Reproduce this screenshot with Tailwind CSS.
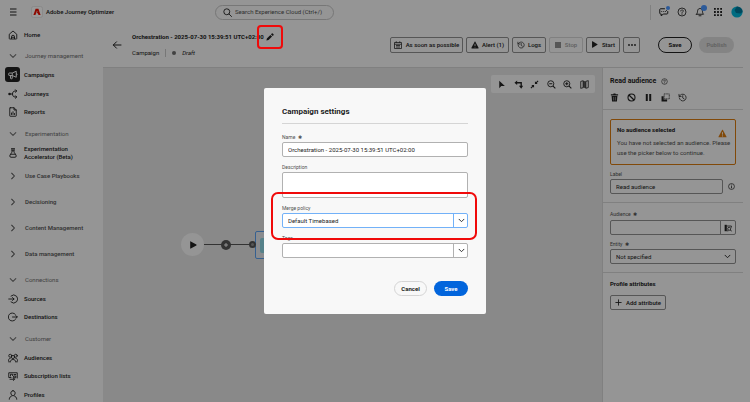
<!DOCTYPE html>
<html lang="en">
<head>
  <meta charset="UTF-8">
  <meta name="viewport" content="width=device-width, initial-scale=1">
  <title>Adobe Journey Optimizer</title>
  <script src="https://cdn.jsdelivr.net/npm/@tailwindcss/browser@4"></script>
</head>
<body class="h-screen overflow-hidden flex flex-col bg-[#f8f8f8] font-['Roboto','Open_Sans',sans-serif] text-[6px] leading-[8px] text-[#222]">

  <!-- Icons -->
  <svg class="hidden">
    <symbol id="down" viewBox="0 0 10 10"><path d="M1.5 3.2 5 6.7l3.500-3.500" fill="none" stroke="currentColor" stroke-width="1.300" stroke-linecap="round" stroke-linejoin="round"/></symbol>
    <symbol id="right" viewBox="0 0 10 10"><path d="M3.300 1.500 6.800 5 3.300 8.500" fill="none" stroke="currentColor" stroke-width="1.300" stroke-linecap="round" stroke-linejoin="round"/></symbol>
    <symbol id="help" viewBox="0 0 20 20"><g fill="none" stroke="currentColor" stroke-width="1.700"><circle cx="10" cy="10" r="8"/><path d="M7.500 8c0-3.200 5-3.200 5 0 0 1.800-2.500 1.800-2.500 3.800" stroke-linecap="round"/></g><circle cx="10" cy="14.200" r="1.100" fill="currentColor"/></symbol>
    <symbol id="history" viewBox="0 0 20 20"><g fill="none" stroke="currentColor" stroke-width="1.700" stroke-linecap="round"><path d="M3 11a7.500 7.500 0 1 0 2-6L2.500 7.500M2.200 3v4.700H7"/><path d="M10.500 6v5l3 2"/></g></symbol>
    <symbol id="play" viewBox="0 0 10 10"><path d="M1.500.8v8.400c0 .4.400.5.700.3l7-4c.4-.3.400-.7 0-1l-7-4c-.3-.2-.7 0-.7.300z" fill="currentColor"/></symbol>
    <symbol id="warn" viewBox="0 0 20 20"><path d="M10 1.500c.4 0 .7.200.9.500l8 15c.3.700-.1 1.500-.9 1.500H2c-.8 0-1.200-.8-.9-1.500l8-15c.2-.3.500-.5.900-.5z" fill="currentColor"/><path d="M10 7v5.500" stroke="#f8f8f8" stroke-width="2"/><circle cx="10" cy="15.300" r="1.200" fill="#f8f8f8"/></symbol>
  </svg>

  <!-- Top bar -->
  <header class="h-6 shrink-0 flex items-center pr-[7px]">
    <div class="flex w-[215px] shrink-0 items-center pl-2">
      <button aria-label="Menu"><svg class="size-[10px]" viewBox="0 0 10 10"><path d="M2 2h6.500M2 5h6.500M2 8h6.500" stroke="currentColor" stroke-width="1"/></svg></button>
      <a href="#" class="ml-[13px] flex items-center gap-[3px] font-medium">
        <svg class="size-3" viewBox="0 0 12 12"><rect x=".5" y=".5" width="11" height="11" rx="2" fill="#fff" stroke="#ddd" stroke-width=".7"/><path d="M4.600 2.800h2.800L9.600 9H7.500L6.900 7.300H5.700L6.100 6l.5.300L6 4.700 4.400 9H2.400z" fill="#eb1000"/></svg>
        Adobe Journey Optimizer
      </a>
    </div>
    <label class="flex w-[119px] h-[15px] items-center gap-[3px] rounded-full border border-[#c6c6c6] pr-1 pl-[7px]">
      <svg class="size-[9px] shrink-0" viewBox="0 0 10 10"><g fill="none" stroke="currentColor" stroke-width="1"><circle cx="4.200" cy="4.200" r="3.300"/><path d="m6.700 6.700 2.800 2.800" stroke-linecap="round"/></g></svg>
      <input type="text" aria-label="Search" placeholder="Search Experience Cloud (Ctrl+/)" class="min-w-0 flex-1 bg-transparent placeholder:text-[#505050]">
    </label>
    <div class="flex flex-1 items-center justify-end gap-2 self-stretch">
      <span class="h-[15px] w-px bg-[#d5d5d5]"></span>
      <button aria-label="Feedback" class="relative">
        <svg class="size-[10px]" viewBox="0 0 20 20"><path d="M11 3.500H3c-.8 0-1.500.7-1.500 1.500v7.500c0 .8.700 1.500 1.500 1.500h1.500v4l4-4H16c.8 0 1.500-.7 1.500-1.500V9M5.500 9h.1M9.500 9h.1M13 9l2-2" fill="none" stroke="currentColor" stroke-width="2" stroke-linecap="round" stroke-linejoin="round"/></svg>
        <span class="absolute -top-px -right-px size-1 rounded-full bg-[#4a96ff]"></span>
      </button>
      <button aria-label="Help"><svg class="size-[10px]"><use href="#help"/></svg></button>
      <button aria-label="Notifications" class="relative">
        <svg class="size-[10px]" viewBox="0 0 20 20"><path d="M3 14.500h14c-2-2-1.800-4-2.200-7C14.500 4.500 12.500 3 10 3S5.500 4.500 5.200 7.500c-.4 3-.2 5-2.200 7zM8 17.500h4" fill="none" stroke="currentColor" stroke-width="1.800" stroke-linecap="round" stroke-linejoin="round"/></svg>
        <span class="absolute -top-[2px] -right-[2px] size-[6px] rounded-full bg-[#4a96ff]"></span>
      </button>
      <button aria-label="Apps"><svg class="size-[10px]" viewBox="0 0 10 10" fill="currentColor"><path d="M1 1h1.800v1.800H1zM4.100 1h1.800v1.800H4.100zM7.200 1H9v1.800H7.200zM1 4.100h1.800v1.800H1zM4.100 4.100h1.800v1.800H4.100zM7.200 4.100H9v1.800H7.200zM1 7.200h1.800V9H1zM4.100 7.200h1.800V9H4.100zM7.200 7.200H9V9H7.200z"/></svg></button>
      <button aria-label="Account"><svg class="size-3" viewBox="0 0 12 12"><circle cx="6" cy="6" r="5.600" fill="#00b5d8"/><path d="M6 .4A5.600 5.600 0 0 1 11.600 6L9.500 7.500 5 7 3.500 4z" fill="#00799b"/></svg></button>
    </div>
  </header>

  <div class="flex min-h-0 flex-1">
    <!-- Side navigation -->
    <nav class="w-[103px] shrink-0 overflow-hidden pt-px font-medium">
      <a href="#" class="flex h-[19px] items-center gap-[6px] pl-2">
        <svg class="size-[10px]" viewBox="0 0 20 20"><path d="M2.500 8.500 10 2l7.500 6.500V17c0 .6-.4 1-1 1h-13c-.6 0-1-.4-1-1zM7 18v-4.500a3 3 0 0 1 6 0V18M6 14.500h8" fill="none" stroke="currentColor" stroke-width="1.800" stroke-linejoin="round"/></svg>Home</a>
      <button class="mt-[3px] flex h-[18px] w-full items-center gap-[8px] pl-[9px] font-normal text-[#6e6e6e]"><svg class="size-2"><use href="#down"/></svg>Journey management</button>
      <a href="#" class="flex h-[19px] items-center gap-[4px] pl-[5px]">
        <span class="flex size-[15px] items-center justify-center rounded-[3px] bg-[#222] text-white"><svg class="size-[10px]" viewBox="0 0 20 20"><path d="M2.500 6h6l8-3.500v12L8.500 11h-6c-.6 0-1-.4-1-1V7c0-.6.400-1 1-1zM8.500 6v5M5 11v5.500c0 .6.400 1 1 1h1.500c.6 0 1-.4 1-1V11M16.500 7c2 0 2 3.500 0 3.500" fill="none" stroke="currentColor" stroke-width="1.900" stroke-linejoin="round"/></svg></span>Campaigns</a>
      <a href="#" class="flex h-[19px] items-center gap-[6px] pl-2">
        <svg class="size-[10px]" viewBox="0 0 20 20"><path d="M3 10h5M17 4h-3c-3 0-5 2.500-5 6s2 6 5 6h3M15 1.500 17.500 4 15 6.500M15 13.500l2.500 2.500-2.500 2.500" fill="none" stroke="currentColor" stroke-width="1.900" stroke-linecap="round" stroke-linejoin="round"/><circle cx="3" cy="10" r="2.500" fill="currentColor"/></svg>Journeys</a>
      <a href="#" class="flex h-[18px] items-center gap-[6px] pl-2">
        <svg class="size-[10px]" viewBox="0 0 20 20"><path d="M4.500 1.500H12L16.500 6v11.500c0 .6-.4 1-1 1h-11c-.6 0-1-.4-1-1v-15c0-.6.400-1 1-1zM12 1.500V6h4.500M7 15v-3M10 15V9.500M13 15v-2" fill="none" stroke="currentColor" stroke-width="1.800" stroke-linecap="round" stroke-linejoin="round"/></svg>Reports</a>
      <button class="mt-[4px] flex h-[18px] w-full items-center gap-[8px] pl-[9px] font-normal text-[#6e6e6e]"><svg class="size-2"><use href="#down"/></svg>Experimentation</button>
      <a href="#" class="flex h-5 items-center gap-[6px] pl-2">
        <svg class="size-[10px] shrink-0" viewBox="0 0 20 20"><path d="M7 1.500h6M8 1.500v6c0 2-4.500 6-4.500 8.500 0 1.500 1 2.500 2.500 2.500h8c1.500 0 2.500-1 2.500-2.500 0-2.500-4.500-6.500-4.500-8.500v-6M5.500 12.500h9M8 5.500h4" fill="none" stroke="currentColor" stroke-width="1.800" stroke-linecap="round"/></svg>
        <span>Experimentation<br>Accelerator (Beta)</span></a>
      <button class="flex h-[26px] w-full items-center gap-[8px] pl-[9px] text-[#505050]"><svg class="size-2"><use href="#right"/></svg>Use Case Playbooks</button>
      <button class="flex h-[26px] w-full items-center gap-[8px] pl-[9px] text-[#505050]"><svg class="size-2"><use href="#right"/></svg>Decisioning</button>
      <button class="flex h-[26px] w-full items-center gap-[8px] pl-[9px] text-[#505050]"><svg class="size-2"><use href="#right"/></svg>Content Management</button>
      <button class="flex h-[26px] w-full items-center gap-[8px] pl-[9px] text-[#505050]"><svg class="size-2"><use href="#right"/></svg>Data management</button>
      <button class="mt-[4px] flex h-[18px] w-full items-center gap-[8px] pl-[9px] font-normal text-[#6e6e6e]"><svg class="size-2"><use href="#down"/></svg>Connections</button>
      <a href="#" class="flex h-[19px] items-center gap-[6px] pl-2">
        <svg class="size-[10px]" viewBox="0 0 20 20"><path d="M6 4a8 8 0 1 1 0 12M1.500 10H12M9 7l3 3-3 3" fill="none" stroke="currentColor" stroke-width="1.800" stroke-linecap="round" stroke-linejoin="round"/></svg>Sources</a>
      <a href="#" class="flex h-[18px] items-center gap-[6px] pl-2">
        <svg class="size-[10px]" viewBox="0 0 20 20"><path d="M14.500 4.500a8 8 0 1 0 0 11M9 10h9.500M15.500 7l3 3-3 3" fill="none" stroke="currentColor" stroke-width="1.800" stroke-linecap="round" stroke-linejoin="round"/></svg>Destinations</a>
      <button class="mt-[4px] flex h-[18px] w-full items-center gap-[8px] pl-[9px] font-normal text-[#6e6e6e]"><svg class="size-2"><use href="#down"/></svg>Customer</button>
      <a href="#" class="flex h-[19px] items-center gap-[6px] pl-2">
        <svg class="size-[10px]" viewBox="0 0 20 20"><g fill="none" stroke="currentColor" stroke-width="1.700" stroke-linecap="round"><circle cx="4.500" cy="5.500" r="3"/><circle cx="15.500" cy="5.500" r="3"/><circle cx="10" cy="8" r="3.200"/><path d="M1 15c0-3 1.500-4.500 3.500-4.500M19 15c0-3-1.500-4.500-3.500-4.500M4.500 18c0-3.500 2.500-5 5.500-5s5.500 1.500 5.500 5M1 17.500h2M17 17.500h2"/></g></svg>Audiences</a>
      <a href="#" class="flex h-[18px] items-center gap-[6px] pl-2">
        <svg class="size-[10px]" viewBox="0 0 20 20"><path d="M18.500 14V3.500h-17V13H6M5 10V6.500h4V9M12 7h3.500M12 10h3.500v3.500H12zM4 16.500h9M10.500 14l2.500 2.500-2.500 2.500" fill="none" stroke="currentColor" stroke-width="1.800" stroke-linecap="round"/></svg>Subscription lists</a>
      <a href="#" class="flex h-[19px] items-center gap-[6px] pl-2">
        <svg class="size-[10px]" viewBox="0 0 20 20"><path d="M10 1.500c2.500 0 4.300 1.800 4.300 4.500S12.500 11.500 10 11.500 5.700 8.700 5.700 6 7.500 1.500 10 1.500zM2.500 18.500c0-4 2.500-5.500 5.500-7M17.500 18.500c0-4-2.500-5.500-5.500-7" fill="none" stroke="currentColor" stroke-width="1.800" stroke-linecap="round"/></svg>Profiles</a>
    </nav>

    <main class="flex min-w-0 flex-1 flex-col">
      <!-- Campaign header -->
      <div class="mr-[7px] flex h-11 shrink-0 items-center border-b border-[#d5d5d5] px-[9px] pb-[2px]">
        <button aria-label="Back"><svg class="size-[10px]" viewBox="0 0 10 10"><path d="M9 5H1.300M4.500 1.800 1.300 5l3.200 3.200" fill="none" stroke="currentColor" stroke-width="1" stroke-linecap="round" stroke-linejoin="round"/></svg></button>
        <div class="ml-[10px] flex flex-1 flex-col gap-2">
          <div class="flex items-center gap-[2px]">
            <h1 class="font-bold whitespace-nowrap">Orchestration - 2025-07-30 15:39:51 UTC+02:00</h1>
            <button aria-label="Edit" class="relative">
              <svg class="size-2" viewBox="0 0 10 10"><path d="M7.300.6a.8.8 0 0 1 1.100 0l1 1a.8.8 0 0 1 0 1.100L8.300 3.800 6.200 1.700zM5.500 2.400l2.100 2.100-4.400 4.400L.5 9.500l.6-2.700z" fill="currentColor"/></svg>
              <span class="absolute -top-2 -left-[9px] z-50 h-[24px] w-[26px] rounded-[4px] border-2 border-[#f00a0a]"></span>
            </button>
          </div>
          <div class="flex items-center gap-[6px]">
            <span>Campaign</span>
            <span class="h-2 w-px bg-[#c6c6c6]"></span>
            <span class="size-1 rounded-full bg-[#6e6e6e]"></span>
            <em>Draft</em>
          </div>
        </div>
        <div class="flex shrink-0 items-center gap-[3px] font-medium">
          <button class="flex h-4 w-[73px] items-center justify-center gap-1 rounded-[2px] border border-[#909090]"><svg class="size-2" viewBox="0 0 16 16"><path d="M1 3h14v12H1zM1 6.500h14M4.500.5v3M11.500.5v3M4 9h8M4 12h8" fill="none" stroke="currentColor" stroke-width="1.500"/></svg>As soon as possible</button>
          <button class="flex h-4 w-[43px] items-center justify-center gap-[3px] rounded-[2px] border border-[#909090]"><svg class="size-2"><use href="#warn"/></svg>Alert (1)</button>
          <button class="flex h-4 w-[34px] items-center justify-center gap-[3px] rounded-[2px] border border-[#909090]"><svg class="size-2"><use href="#history"/></svg>Logs</button>
          <button disabled class="flex h-4 w-[34px] items-center justify-center gap-1 rounded-[2px] border border-[#d5d5d5] text-[#a0a0a0]"><span class="size-[6px] bg-[#909090]"></span>Stop</button>
          <button class="flex h-4 w-[34px] items-center justify-center gap-1 rounded-[2px] border border-[#909090]"><svg class="size-[7px]"><use href="#play"/></svg>Start</button>
          <button aria-label="More" class="flex h-4 w-[17px] items-center justify-center rounded-[2px] border border-[#909090]"><svg class="size-2" viewBox="0 0 8 8" fill="currentColor"><circle cx="1" cy="4" r=".9"/><circle cx="4" cy="4" r=".9"/><circle cx="7" cy="4" r=".9"/></svg></button>
          <button class="ml-[15px] h-4 w-[34px] rounded-full border border-[#222] font-bold">Save</button>
          <button disabled class="ml-1 h-4 w-[35px] rounded-full bg-[#dcdcdc] font-bold text-[#a8a8a8]">Publish</button>
        </div>
      </div>

      <div class="flex min-h-0 flex-1">
        <!-- Canvas -->
        <section class="relative flex-1 overflow-hidden bg-[#e4e4e4]">
          <div class="absolute top-[7px] right-[7px] flex h-[18px] w-[104px] items-center justify-between rounded-[2px] bg-[#f8f8f8] px-[6px]">
            <button aria-label="Select"><svg class="size-[9px]" viewBox="0 0 10 10"><path d="M2.500.8v8.400l2.200-2.400 4-.2z" fill="currentColor"/></svg></button>
            <button aria-label="Rotate"><svg class="size-[9px]" viewBox="0 0 10 10"><path d="M3 3h5v4" fill="none" stroke="currentColor" stroke-width="1.500"/><path d="M3.500.500v5L.500 3zM5.500 6.500h4.700L8 9.700z" fill="currentColor"/></svg></button>
            <button aria-label="Fit"><svg class="size-[9px]" viewBox="0 0 10 10"><path d="m9 1-2.500 2.500M1 9l2.500-2.500" stroke="currentColor" stroke-width="1.200"/><path d="M5.500 1.500v3h3zM4.500 8.500v-3h-3z" fill="currentColor"/></svg></button>
            <button aria-label="Zoom out"><svg class="size-[9px]" viewBox="0 0 10 10"><path d="M6.700 6.700 9.300 9.300M2.500 4.200h3.400" stroke="currentColor" stroke-width="1.200"/><circle cx="4.200" cy="4.200" r="3.400" fill="none" stroke="currentColor" stroke-width="1"/></svg></button>
            <button aria-label="Zoom in"><svg class="size-[9px]" viewBox="0 0 10 10"><path d="M6.700 6.700 9.300 9.300M2.500 4.200h3.400M4.200 2.500v3.400" stroke="currentColor" stroke-width="1.200"/><circle cx="4.200" cy="4.200" r="3.400" fill="none" stroke="currentColor" stroke-width="1"/></svg></button>
            <button aria-label="Map"><svg class="size-[9px]" viewBox="0 0 10 10"><path d="M.8 1.600 3.500.8v7.700l-2.700.8zM6.500 1.500l2.700-.8v7.700l-2.700.8z" fill="none" stroke="currentColor" stroke-width=".9"/><path d="m3.500.8 3 .9v7.500l-3-.9z" fill="currentColor" opacity=".75"/></svg></button>
          </div>
          <div class="absolute top-[176px] left-[89px] h-px w-[64px] bg-[#555]"></div>
          <div class="absolute top-[165px] left-[78px] flex size-[23px] items-center justify-center rounded-full bg-[#f8f8f8]"><svg class="size-2"><use href="#play"/></svg></div>
          <div class="absolute top-[172px] left-[118px] flex size-[10px] items-center justify-center rounded-full bg-[#555] text-white"><svg class="size-[6px]" viewBox="0 0 6 6"><path d="M3 1v4M1 3h4" stroke="currentColor" stroke-width=".9"/></svg></div>
          <div class="absolute top-[163px] left-[152px] flex h-[28px] w-[90px] items-center rounded-[2px] border border-[#5aa0f0] bg-[#e6e9ee] pl-1"><span class="h-[15px] w-4 rounded-[2px] bg-[#8fd9e6]"></span></div>
          <div class="absolute top-[173px] left-[146px] size-[7px] rounded-full border-2 border-[#555] bg-[#909090]"></div>
        </section>

        <!-- Properties panel -->
        <aside class="w-[148px] shrink-0 border-l border-[#d5d5d5] pr-[7px]">
          <div class="flex h-[42px] flex-col gap-[7px] border-b border-[#d5d5d5] px-[7px] pt-2">
            <h2 class="flex items-center gap-[5px] text-[7px] leading-[10px] font-bold">Read audience <svg class="size-[7px]"><use href="#help"/></svg></h2>
            <div class="flex items-center gap-2">
              <button aria-label="Delete"><svg class="size-[9px]" viewBox="0 0 10 10"><path d="M1 1.500h2.500l.5-.9h2l.5.900H9v1.200H1zM1.800 3.300h6.400l-.5 6.200H2.300z" fill="currentColor"/><path d="M4 4.300v4M6 4.300v4" stroke="#f8f8f8" stroke-width=".5"/></svg></button>
              <button aria-label="Disable"><svg class="size-[9px]" viewBox="0 0 10 10"><path d="m2.200 2.200 5.600 5.600" stroke="currentColor" stroke-width="1.300"/><circle cx="5" cy="5" r="3.900" fill="none" stroke="currentColor" stroke-width="1.200"/></svg></button>
              <button aria-label="Pause"><svg class="size-[9px]" viewBox="0 0 10 10"><path d="M2 1h2.200v8H2zM5.800 1H8v8H5.800z" fill="currentColor"/></svg></button>
              <button aria-label="Copy"><svg class="size-[9px]" viewBox="0 0 10 10"><path d="M3.500 1h5.700v5.500H3.500z" fill="none" stroke="currentColor" stroke-width=".8" stroke-dasharray="1.200 .5"/><path d="M.6 3.500h2.300v3.700h3.900v2.200H.6z" fill="currentColor"/></svg></button>
              <button aria-label="History"><svg class="size-[9px]"><use href="#history"/></svg></button>
            </div>
          </div>
          <div class="flex h-[93px] flex-col border-b border-[#d5d5d5] px-[7px] pt-[9px]">
            <div class="flex h-[46px] justify-between rounded-[2px] border border-[#d77a10] px-[6px] pt-[6px]">
              <div class="whitespace-nowrap">
                <p class="font-bold">No audience selected</p>
                <p class="mt-1 leading-[10px] text-[#505050]">You have not selected an audience. Please<br>use the picker below to continue.</p>
              </div>
              <svg class="-ml-[12px] mt-[3px] mr-1 size-[9px] shrink-0 text-[#d77a10]"><use href="#warn"/></svg>
            </div>
            <label for="label" class="mt-[5px] text-[5px] leading-[8px] text-[#505050]">Label</label>
            <div class="mt-px flex items-center gap-[5px]">
              <input id="label" type="text" value="Read audience" class="h-[15px] min-w-0 flex-1 rounded-[2px] border border-[#909090] px-[5px]">
              <svg class="mr-px size-[7px]" viewBox="0 0 10 10"><circle cx="5" cy="5" r="4.200" fill="none" stroke="currentColor"/><path d="M5 4.500v3M5 2.300v1.200" stroke="currentColor" stroke-width="1.200"/></svg>
            </div>
          </div>
          <div class="flex h-[70px] flex-col border-b border-[#d5d5d5] px-[7px] pt-[7px]">
            <label for="audience" class="text-[5px] leading-[8px] text-[#505050]">Audience &nbsp;✱</label>
            <div class="mt-[2px] flex">
              <input id="audience" type="text" class="h-[15px] min-w-0 flex-1 rounded-l-[2px] border border-[#909090] px-[5px]">
              <button aria-label="Pick audience" class="-ml-px flex w-[16px] items-center justify-center rounded-r-[2px] border border-[#909090]"><svg class="size-2" viewBox="0 0 10 10"><path d="M.8 1h2.700v8H.8z" fill="currentColor"/><path d="M3.500 2.500h5.700v2M3.500 8.500h2" fill="none" stroke="currentColor"/><circle cx="6.500" cy="6" r="1.900" fill="none" stroke="currentColor"/><path d="m8 7.500 1.800 1.800" stroke="currentColor" stroke-width="1.200"/></svg></button>
            </div>
            <label for="entity" class="mt-[5px] text-[5px] leading-[8px] text-[#505050]">Entity &nbsp;✱</label>
            <div class="relative mt-px">
              <select id="entity" class="h-[15px] w-full appearance-none rounded-[2px] border border-[#909090] px-[5px]"><option>Not specified</option></select>
              <svg class="pointer-events-none absolute top-1 right-[5px] size-[7px]"><use href="#down"/></svg>
            </div>
          </div>
          <div class="px-[7px] pt-[7px]">
            <h3 class="font-bold">Profile attributes</h3>
            <button class="mt-[7px] flex h-[15px] w-[56px] items-center justify-center gap-1 rounded-[2px] border border-[#909090] font-medium"><svg class="size-[7px]" viewBox="0 0 8 8"><path d="M4 .5v7M.5 4h7" stroke="currentColor" stroke-width="1"/></svg>Add attribute</button>
          </div>
        </aside>
      </div>
    </main>
  </div>

  <!-- Campaign settings dialog -->
  <div class="fixed inset-0 z-40 flex items-center justify-center bg-black/40">
    <form role="dialog" aria-labelledby="dialog-title" class="flex w-[222px] flex-col rounded-[2px] bg-[#f8f8f8] p-[18px]">
      <h2 id="dialog-title" class="border-b border-[#d5d5d5] pb-[5px] text-[8px] leading-[12px] font-bold">Campaign settings</h2>
      <label for="name" class="mt-[9px] text-[5px] leading-[8px] text-[#505050]">Name &nbsp;✱</label>
      <input id="name" type="text" value="Orchestration - 2025-07-30 15:39:51 UTC+02:00" class="mt-px h-[15px] rounded-[2px] border border-[#b1b1b1] bg-white px-[5px]">
      <label for="description" class="mt-[6px] text-[5px] leading-[8px] text-[#505050]">Description</label>
      <textarea id="description" class="mt-px h-[26px] resize-none rounded-[2px] border border-[#b1b1b1] bg-white px-[5px]"></textarea>
      <div class="relative mt-[6px] flex flex-col">
        <label for="merge" class="text-[5px] leading-[8px] text-[#505050]">Merge policy</label>
        <div class="relative mt-px">
          <select id="merge" class="h-[15px] w-full appearance-none rounded-[2px] border border-[#72b1f8] bg-white px-[5px]"><option>Default Timebased</option></select>
          <span class="pointer-events-none absolute inset-y-0 right-0 flex w-[15px] items-center justify-center border-l border-[#72b1f8]"><svg class="size-[7px]"><use href="#down"/></svg></span>
        </div>
        <span class="pointer-events-none absolute -top-3 -right-[9px] -left-[11px] z-10 h-[48px] rounded-[7px] border-2 border-[#f00a0a]"></span>
      </div>
      <label for="tags" class="mt-[6px] text-[5px] leading-[8px] text-[#505050]">Tags</label>
      <div class="relative mt-px">
        <select id="tags" class="h-[15px] w-full appearance-none rounded-[2px] border border-[#b1b1b1] bg-white px-[5px]"><option></option></select>
        <span class="pointer-events-none absolute inset-y-0 right-0 flex w-[15px] items-center justify-center border-l border-[#b1b1b1]"><svg class="size-[7px]"><use href="#down"/></svg></span>
      </div>
      <div class="mt-[23px] flex justify-end gap-[7px] font-bold">
        <button type="button" class="h-[15px] w-[33px] rounded-full border border-[#d5d5d5]">Cancel</button>
        <button type="submit" class="h-[15px] w-[34px] rounded-full bg-[#0265dc] text-white">Save</button>
      </div>
    </form>
  </div>
</body>
</html>
